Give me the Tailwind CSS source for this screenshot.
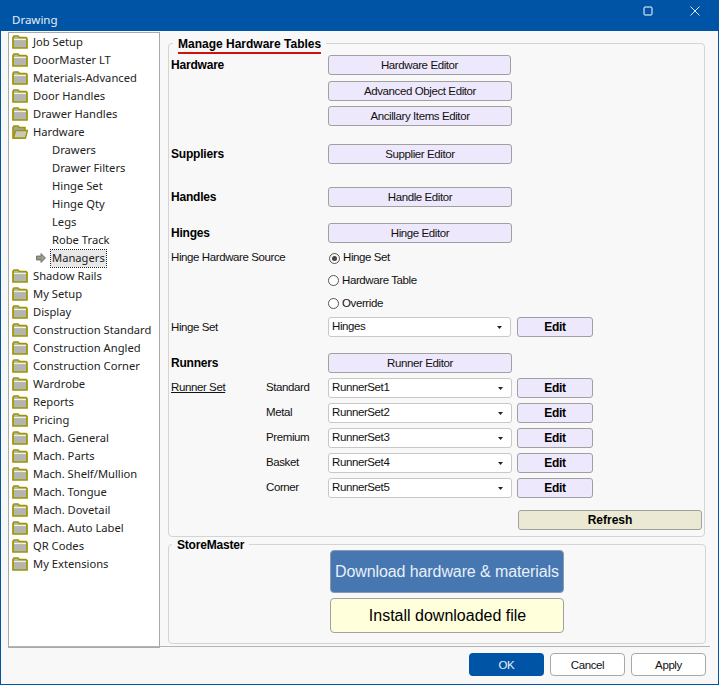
<!DOCTYPE html>
<html lang="en">
<head>
  <meta charset="UTF-8" />
  <title>Drawing</title>
  <script src="https://cdn.jsdelivr.net/npm/@tailwindcss/browser@4"></script>
</head>

<body class="overflow-hidden bg-[#f8f8f8]">
  <svg class="hidden">
    <symbol id="folder" viewBox="0 0 16 14">
      <path d="M1 2.5 L2 1 H6 L7.5 2.5 H14 L15 3.5 V13 H1 Z" fill="#b4b4b0" stroke="#9c9600" stroke-width="1.7"/>
      <path d="M2 4.5 H14" stroke="#f4f4c8" stroke-width="1.2"/>
    </symbol>
    <symbol id="folder-open" viewBox="0 0 16 14">
      <path d="M1 2.5 L2 1 H6 L7.5 2.5 H13 V13 H1 Z" fill="#a5a5a0" stroke="#9c9600" stroke-width="1.6"/>
      <path d="M1.5 13 L3.5 5.5 H15.5 L13.5 13 Z" fill="#c8c8c0" stroke="#9c9600" stroke-width="1.4"/>
    </symbol>
    <symbol id="caret" viewBox="0 0 7 4">
      <path d="M0 0 H7 L3.5 4 Z" fill="#222"/>
    </symbol>
  </svg>

  <div class="w-[719px] h-[685px] flex flex-col border border-t-0 border-[#0054a6] font-['Liberation_Sans',sans-serif] text-[11.5px] tracking-[-0.4px] text-[#111]">

    <!-- Title bar -->
    <div class="h-[31px] -mx-px bg-[#0054a6] text-white flex items-start pt-[6px] pl-[12px] shrink-0">
      <span class="mt-[5px] font-['Noto_Sans',sans-serif] text-[11.5px] tracking-[0px] text-[#e6eef6]">Drawing</span>
      <div class="ml-auto flex items-center">
        <svg class="w-[10px] h-[10px] mr-[37px]" viewBox="0 0 10 10"><rect x="1" y="1" width="8" height="8" rx="1" fill="none" stroke="#fff" stroke-width="1"/></svg>
        <svg class="w-[10px] h-[10px] mr-[19px]" viewBox="0 0 10 10"><path d="M0.5 0.5 L9.5 9.5 M9.5 0.5 L0.5 9.5" stroke="#dce8f3" stroke-width="1"/></svg>
      </div>
    </div>

    <div class="flex flex-1 min-h-0 pl-[7px]">
      <!-- Tree -->
      <div class="w-[152px] h-[616px] mt-px border border-[#a9a9a9] bg-white pl-[3px] font-['Noto_Sans',sans-serif] text-[11.2px] tracking-[0px] text-[#222] shrink-0">
        <div class="h-[18px] flex items-center gap-[5px]"><svg class="w-[16px] h-[14px]"><use href="#folder"/></svg>Job Setup</div>
        <div class="h-[18px] flex items-center gap-[5px]"><svg class="w-[16px] h-[14px]"><use href="#folder"/></svg>DoorMaster LT</div>
        <div class="h-[18px] flex items-center gap-[5px]"><svg class="w-[16px] h-[14px]"><use href="#folder"/></svg>Materials-Advanced</div>
        <div class="h-[18px] flex items-center gap-[5px]"><svg class="w-[16px] h-[14px]"><use href="#folder"/></svg>Door Handles</div>
        <div class="h-[18px] flex items-center gap-[5px]"><svg class="w-[16px] h-[14px]"><use href="#folder"/></svg>Drawer Handles</div>
        <div class="h-[18px] flex items-center gap-[5px]"><svg class="w-[16px] h-[14px]"><use href="#folder-open"/></svg>Hardware</div>
        <div class="h-[18px] flex items-center pl-[40px]">Drawers</div>
        <div class="h-[18px] flex items-center pl-[40px]">Drawer Filters</div>
        <div class="h-[18px] flex items-center pl-[40px]">Hinge Set</div>
        <div class="h-[18px] flex items-center pl-[40px]">Hinge Qty</div>
        <div class="h-[18px] flex items-center pl-[40px]">Legs</div>
        <div class="h-[18px] flex items-center pl-[40px]">Robe Track</div>
        <div class="h-[18px] flex items-center pl-[24px]">
          <svg class="w-[10px] h-[10px] mr-[5px]" viewBox="0 0 10 10"><path d="M0.5 3 H5 V0.5 L9.5 5 L5 9.5 V7 H0.5 Z" fill="#9a9a88" stroke="#555" stroke-width="0.7"/></svg>
          <span class="h-[17px] px-px flex items-center bg-[#e8e8e8] outline-1 outline-dotted outline-[#222]">Managers</span>
        </div>
        <div class="h-[18px] flex items-center gap-[5px]"><svg class="w-[16px] h-[14px]"><use href="#folder"/></svg>Shadow Rails</div>
        <div class="h-[18px] flex items-center gap-[5px]"><svg class="w-[16px] h-[14px]"><use href="#folder"/></svg>My Setup</div>
        <div class="h-[18px] flex items-center gap-[5px]"><svg class="w-[16px] h-[14px]"><use href="#folder"/></svg>Display</div>
        <div class="h-[18px] flex items-center gap-[5px]"><svg class="w-[16px] h-[14px]"><use href="#folder"/></svg>Construction Standard</div>
        <div class="h-[18px] flex items-center gap-[5px]"><svg class="w-[16px] h-[14px]"><use href="#folder"/></svg>Construction Angled</div>
        <div class="h-[18px] flex items-center gap-[5px]"><svg class="w-[16px] h-[14px]"><use href="#folder"/></svg>Construction Corner</div>
        <div class="h-[18px] flex items-center gap-[5px]"><svg class="w-[16px] h-[14px]"><use href="#folder"/></svg>Wardrobe</div>
        <div class="h-[18px] flex items-center gap-[5px]"><svg class="w-[16px] h-[14px]"><use href="#folder"/></svg>Reports</div>
        <div class="h-[18px] flex items-center gap-[5px]"><svg class="w-[16px] h-[14px]"><use href="#folder"/></svg>Pricing</div>
        <div class="h-[18px] flex items-center gap-[5px]"><svg class="w-[16px] h-[14px]"><use href="#folder"/></svg>Mach. General</div>
        <div class="h-[18px] flex items-center gap-[5px]"><svg class="w-[16px] h-[14px]"><use href="#folder"/></svg>Mach. Parts</div>
        <div class="h-[18px] flex items-center gap-[5px]"><svg class="w-[16px] h-[14px]"><use href="#folder"/></svg>Mach. Shelf/Mullion</div>
        <div class="h-[18px] flex items-center gap-[5px]"><svg class="w-[16px] h-[14px]"><use href="#folder"/></svg>Mach. Tongue</div>
        <div class="h-[18px] flex items-center gap-[5px]"><svg class="w-[16px] h-[14px]"><use href="#folder"/></svg>Mach. Dovetail</div>
        <div class="h-[18px] flex items-center gap-[5px]"><svg class="w-[16px] h-[14px]"><use href="#folder"/></svg>Mach. Auto Label</div>
        <div class="h-[18px] flex items-center gap-[5px]"><svg class="w-[16px] h-[14px]"><use href="#folder"/></svg>QR Codes</div>
        <div class="h-[18px] flex items-center gap-[5px]"><svg class="w-[16px] h-[14px]"><use href="#folder"/></svg>My Extensions</div>
      </div>

      <!-- Right pane -->
      <div class="w-[538px] ml-[8px] pt-[12px]">
        <div class="relative h-[494px] w-[537px] border border-[#d4d4d4] rounded-[4px] pl-[2px] pt-[11px]">
          <div class="absolute -top-[7px] left-[4px] px-[5px] bg-[#f8f8f8] font-bold text-[12px] tracking-[0px] leading-[14px] text-black">
            Manage Hardware Tables
            <div class="h-[2px] bg-[#d01010] mt-[1px]"></div>
          </div>

          <div class="flex h-[20px] items-center"><b class="w-[157px] text-[12px] tracking-[-0.2px] text-black">Hardware</b><button class="w-[183px] h-[20px] pt-px rounded-[3px] border border-[#a0a0a0] bg-[#eee8fc]">Hardware Editor</button></div>
          <div class="flex h-[20px] items-center mt-[6px] pl-[157px]"><button class="w-[184px] h-[20px] pt-px rounded-[3px] border border-[#a0a0a0] bg-[#eee8fc]">Advanced Object Editor</button></div>
          <div class="flex h-[20px] items-center mt-[5px] pl-[157px]"><button class="w-[184px] h-[20px] pt-px rounded-[3px] border border-[#a0a0a0] bg-[#eee8fc]">Ancillary Items Editor</button></div>
          <div class="flex h-[20px] items-center mt-[18px]"><b class="w-[157px] -mt-px text-[12px] tracking-[-0.2px] text-black">Suppliers</b><button class="w-[184px] h-[20px] pt-px rounded-[3px] border border-[#a0a0a0] bg-[#eee8fc]">Supplier Editor</button></div>
          <div class="flex h-[20px] items-center mt-[23px]"><b class="w-[157px] -mt-px text-[12px] tracking-[-0.2px] text-black">Handles</b><button class="w-[184px] h-[20px] pt-px rounded-[3px] border border-[#a0a0a0] bg-[#eee8fc]">Handle Editor</button></div>
          <div class="flex h-[20px] items-center mt-[16px]"><b class="w-[157px] text-[12px] tracking-[-0.2px] text-black">Hinges</b><button class="w-[184px] h-[20px] pt-px rounded-[3px] border border-[#a0a0a0] bg-[#eee8fc]">Hinge Editor</button></div>

          <div class="flex mt-[4px]">
            <span class="w-[157px] mt-[3px] leading-[14px]">Hinge Hardware Source</span>
            <div class="flex flex-col">
              <label class="flex h-[22px] items-center gap-[3px] pl-px"><span class="w-[11px] h-[11px] rounded-full border border-[#555] flex items-center justify-center"><span class="w-[5px] h-[5px] rounded-full bg-[#444]"></span></span>Hinge Set</label>
              <label class="flex h-[23px] items-center gap-[3px]"><span class="w-[11px] h-[11px] rounded-full border border-[#555] bg-white"></span>Hardware Table</label>
              <label class="flex h-[23px] items-center gap-[3px]"><span class="w-[11px] h-[11px] rounded-full border border-[#555] bg-white"></span>Override</label>
            </div>
          </div>

          <div class="flex h-[20px] items-center mt-[2px]">
            <span class="w-[157px] pt-px">Hinge Set</span>
            <div class="w-[183px] h-[20px] rounded-[3px] border border-[#c8c8c8] bg-white flex items-center justify-between pl-[3px] pr-[8px]">Hinges<svg class="w-[5px] h-[3px]"><use href="#caret"/></svg></div>
            <button class="w-[76px] h-[20px] ml-[6px] rounded-[3px] border border-[#a0a0a0] bg-[#eee8fc] font-bold text-[12px] tracking-[-0.3px] text-black">Edit</button>
          </div>

          <div class="flex h-[20px] items-center mt-[16px]"><b class="w-[157px] text-[12px] tracking-[-0.2px] text-black">Runners</b><button class="w-[184px] h-[20px] pt-px rounded-[3px] border border-[#a0a0a0] bg-[#eee8fc]">Runner Editor</button></div>

          <div class="flex h-[20px] items-center mt-[5px]">
            <span class="w-[95px] underline">Runner Set</span><span class="w-[62px]">Standard</span>
            <div class="w-[184px] h-[20px] rounded-[3px] border border-[#c8c8c8] bg-white flex items-center justify-between pl-[3px] pr-[8px]">RunnerSet1<svg class="w-[5px] h-[3px]"><use href="#caret"/></svg></div>
            <button class="w-[76px] h-[20px] ml-[5px] rounded-[3px] border border-[#a0a0a0] bg-[#eee8fc] font-bold text-[12px] tracking-[-0.3px] text-black">Edit</button>
          </div>
          <div class="flex h-[20px] items-center mt-[5px] pl-[95px]">
            <span class="w-[62px]">Metal</span>
            <div class="w-[184px] h-[20px] rounded-[3px] border border-[#c8c8c8] bg-white flex items-center justify-between pl-[3px] pr-[8px]">RunnerSet2<svg class="w-[5px] h-[3px]"><use href="#caret"/></svg></div>
            <button class="w-[76px] h-[20px] ml-[5px] rounded-[3px] border border-[#a0a0a0] bg-[#eee8fc] font-bold text-[12px] tracking-[-0.3px] text-black">Edit</button>
          </div>
          <div class="flex h-[20px] items-center mt-[5px] pl-[95px]">
            <span class="w-[62px]">Premium</span>
            <div class="w-[184px] h-[20px] rounded-[3px] border border-[#c8c8c8] bg-white flex items-center justify-between pl-[3px] pr-[8px]">RunnerSet3<svg class="w-[5px] h-[3px]"><use href="#caret"/></svg></div>
            <button class="w-[76px] h-[20px] ml-[5px] rounded-[3px] border border-[#a0a0a0] bg-[#eee8fc] font-bold text-[12px] tracking-[-0.3px] text-black">Edit</button>
          </div>
          <div class="flex h-[20px] items-center mt-[5px] pl-[95px]">
            <span class="w-[62px]">Basket</span>
            <div class="w-[184px] h-[20px] rounded-[3px] border border-[#c8c8c8] bg-white flex items-center justify-between pl-[3px] pr-[8px]">RunnerSet4<svg class="w-[5px] h-[3px]"><use href="#caret"/></svg></div>
            <button class="w-[76px] h-[20px] ml-[5px] rounded-[3px] border border-[#a0a0a0] bg-[#eee8fc] font-bold text-[12px] tracking-[-0.3px] text-black">Edit</button>
          </div>
          <div class="flex h-[20px] items-center mt-[5px] pl-[95px]">
            <span class="w-[62px]">Corner</span>
            <div class="w-[184px] h-[20px] rounded-[3px] border border-[#c8c8c8] bg-white flex items-center justify-between pl-[3px] pr-[8px]">RunnerSet5<svg class="w-[5px] h-[3px]"><use href="#caret"/></svg></div>
            <button class="w-[76px] h-[20px] ml-[5px] rounded-[3px] border border-[#a0a0a0] bg-[#eee8fc] font-bold text-[12px] tracking-[-0.3px] text-black">Edit</button>
          </div>

          <div class="flex justify-end mt-[12px] pr-[2px]">
            <button class="w-[184px] h-[20px] rounded-[3px] border border-[#a0a0a0] bg-[#ebe9d3] font-bold text-[12px] tracking-[0px] text-black">Refresh</button>
          </div>
        </div>

        <div class="relative h-[100px] w-[538px] mt-[7px] border border-[#d4d4d4] rounded-[4px] pt-[5px] pl-[161px]">
          <div class="absolute -top-[7px] left-[3px] px-[5px] bg-[#f8f8f8] font-bold text-[12px] tracking-[-0.2px] leading-[14px] text-black">StoreMaster</div>
          <button class="block w-[234px] h-[43px] rounded-[4px] border border-[#8a9bb0] bg-[#4677b0] text-[#e8f0fa] text-[16px] tracking-[-0.1px]">Download hardware &amp; materials</button>
          <button class="block w-[234px] h-[35px] mt-[5px] pl-px rounded-[4px] border border-[#a0a0a0] bg-[#ffffdc] text-black text-[16px] tracking-[0px]">Install downloaded file</button>
        </div>
      </div>
    </div>

    <!-- Footer buttons -->
    <div class="h-[38px] mx-[8px] border-t border-[#b4b4b4] flex items-start justify-end pt-[6px] pr-[4px] gap-[6px] shrink-0">
      <button class="w-[75px] h-[23px] pt-[2px] rounded-[4px] bg-[#0054a6] text-[#e8f0fa]">OK</button>
      <button class="w-[75px] h-[23px] pt-[2px] rounded-[4px] border border-[#a8a8a8] bg-white">Cancel</button>
      <button class="w-[75px] h-[23px] pt-[2px] rounded-[4px] border border-[#a8a8a8] bg-white">Apply</button>
    </div>
  </div>
</body>
</html>
